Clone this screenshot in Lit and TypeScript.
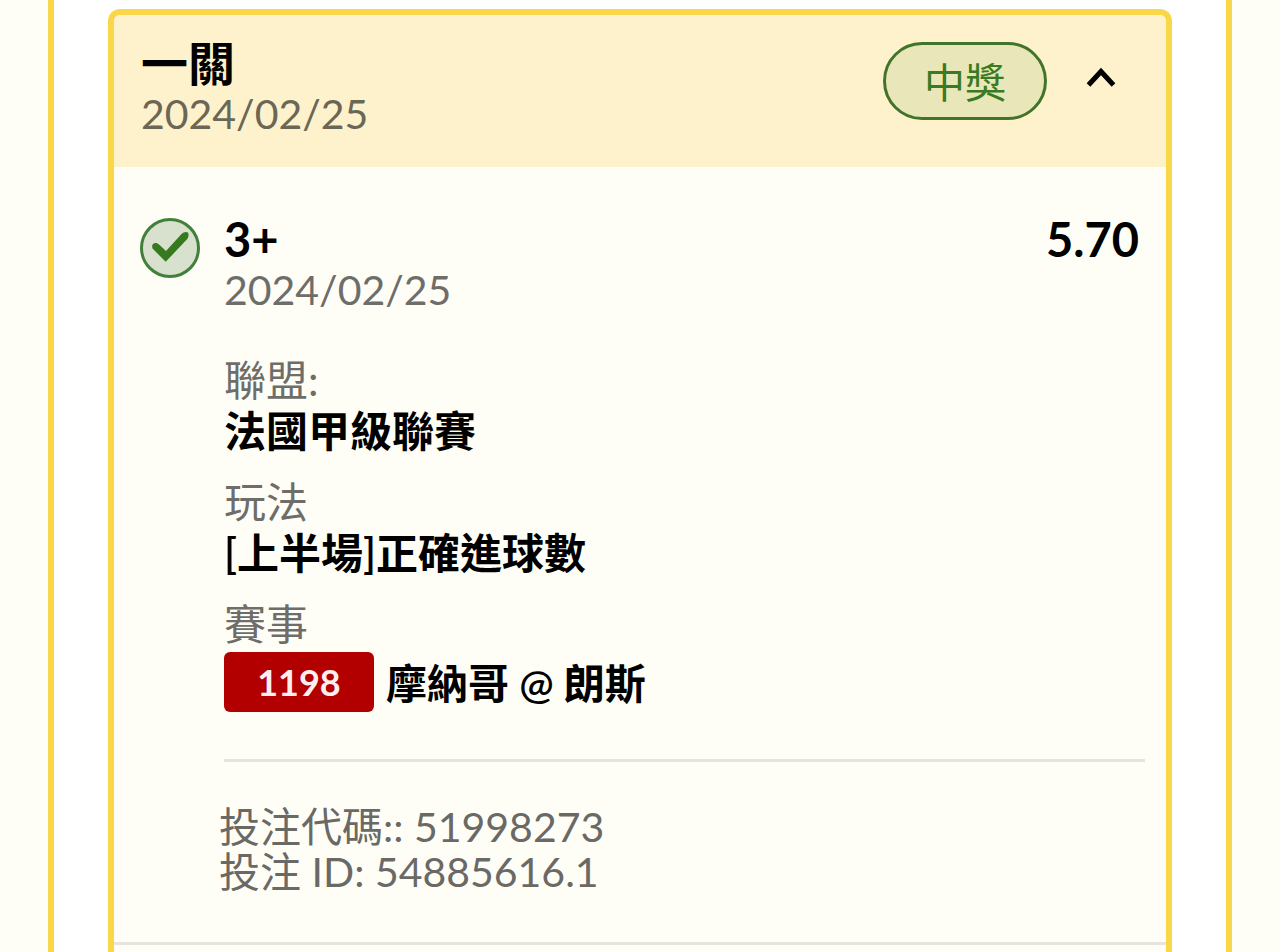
import { LitElement, html, css } from "lit";
import { customElement } from "lit/decorators.js";

interface Bet {
  title: string;
  date: string;
  status: string;
  pick: string;
  pickDate: string;
  odds: string;
  league: string;
  market: string;
  matchNo: string;
  match: string;
  code: string;
  id: string;
}

const bet: Bet = {
  title: "一關",
  date: "2024/02/25",
  status: "中獎",
  pick: "3+",
  pickDate: "2024/02/25",
  odds: "5.70",
  league: "法國甲級聯賽",
  market: "[上半場]正確進球數",
  matchNo: "1198",
  match: "摩納哥 @ 朗斯",
  code: "51998273",
  id: "54885616.1",
};

@customElement("bet-card")
export class BetCard extends LitElement {
  static styles = css`
    :host {
      display: flex;
      flex-direction: column;
      flex: 1;
      box-sizing: border-box;
      border: 6px solid #f9d749;
      border-bottom: 0;
      border-radius: 12px 12px 0 0;
      background: #fffef6;
    }
    .header {
      display: flex;
      align-items: flex-start;
      padding: 23px 27px 27px;
      background: #fef2cd;
      border-radius: 6px 6px 0 0;
    }
    .heading {
      flex: 1;
    }
    .title,
    .pick,
    .odds {
      margin: 0;
      font-size: 47px;
      line-height: 50px;
      font-weight: 700;
      color: #000;
    }
    .date {
      margin: 0;
      font-size: 41px;
      line-height: 52px;
      color: #6a6756;
    }
    .status {
      box-sizing: border-box;
      margin-top: 4px;
      padding: 4px 38px 0;
      border: 3px solid #41742a;
      border-radius: 40px;
      background: #e9e7b9;
      color: #3a7a22;
      font-size: 41px;
      line-height: 68px;
    }
    .toggle {
      display: flex;
      align-items: center;
      justify-content: center;
      width: 60px;
      height: 60px;
      margin: 10px 8px 0 24px;
      padding: 0;
      border: 0;
      background: none;
    }
    .body {
      display: grid;
      grid-template-columns: 60px 1fr;
      column-gap: 24px;
      padding: 47px 21px 48px 26px;
    }
    .won {
      display: block;
      margin-top: 4px;
    }
    .summary {
      display: flex;
      justify-content: space-between;
      padding-right: 6px;
    }
    .body .date,
    .label {
      color: #6e6d69;
    }
    .facts {
      margin: 38px 0 0;
    }
    .label {
      line-height: 52px;
    }
    .value {
      margin: 0 0 20px;
      line-height: 50px;
      font-weight: 600;
      color: #000;
    }
    .match {
      display: flex;
      align-items: center;
      gap: 12px;
      margin: 2px 0 0;
      font-size: 41px;
      line-height: 60px;
    }
    .teams {
      padding-top: 4px;
      line-height: 56px;
    }
    .number {
      width: 150px;
      border-radius: 6px;
      background: #b20000;
      color: #ffeef0;
      font-size: 36px;
      font-weight: 700;
      text-align: center;
    }
    .rule {
      height: 3px;
      margin: 47px 0 0;
      border: 0;
      background: #e7e4de;
    }
    .refs {
      grid-column: 2;
      margin: 42px 0 0 -5px;
      font-size: 41px;
      line-height: 45px;
      color: #6a6965;
    }
    .refs p {
      margin: 0;
    }
    .end {
      width: 100%;
      height: 3px;
      margin: 0;
      border: 0;
      background: #e7e4de;
    }
  `;

  render() {
    return html`
      <header class="header">
        <div class="heading">
          <h2 class="title">${bet.title}</h2>
          <p class="date">${bet.date}</p>
        </div>
        <span class="status">${bet.status}</span>
        <button class="toggle" type="button" aria-label="收合" aria-expanded="true">
          <svg width="30" height="22" viewBox="0 0 30 22" fill="none" stroke="#000" stroke-width="5">
            <path d="M2.500 18 15 4.500 27.500 18" />
          </svg>
        </button>
      </header>
      <section class="body">
        <svg class="won" width="60" height="60" viewBox="0 0 60 60" fill="none">
          <circle cx="30" cy="30" r="28.500" fill="#d7e1cd" stroke="#41803a" stroke-width="3" />
          <path
            d="M13 26C14.500 24.500 17 24.500 19 26.500L26 33 41.500 16C43.500 14 46 13.400 48 14.500 49 16.500 48.500 19.500 47 21.300L25.700 43.800 13.500 31.500C12 30 11.500 27.800 13 26Z"
            fill="#37791f"
          />
        </svg>
        <div class="content">
          <div class="summary">
            <div>
              <h3 class="pick">${bet.pick}</h3>
              <p class="date">${bet.pickDate}</p>
            </div>
            <span class="odds">${bet.odds}</span>
          </div>
          <dl class="facts">
            <dt class="label">聯盟:</dt>
            <dd class="value">${bet.league}</dd>
            <dt class="label">玩法</dt>
            <dd class="value">${bet.market}</dd>
            <dt class="label">賽事</dt>
            <dd class="value match">
              <span class="number">${bet.matchNo}</span>
              <span class="teams">${bet.match}</span>
            </dd>
          </dl>
          <hr class="rule" />
        </div>
        <div class="refs">
          <p>投注代碼:: ${bet.code}</p>
          <p>投注 ID: ${bet.id}</p>
        </div>
      </section>
      <hr class="end" />
    `;
  }
}

@customElement("app-root")
export class AppRoot extends LitElement {
  static styles = css`
    :host {
      display: block;
      padding: 0 48px;
      background: #fffef6;
      font-family: Lato, "Noto Sans CJK TC", sans-serif;
      font-size: 42px;
    }
    .panel {
      display: flex;
      flex-direction: column;
      box-sizing: border-box;
      min-height: 100vh;
      padding: 9px 54px 0;
      border: solid #f9d749;
      border-width: 0 6px;
      background: #fff;
    }
  `;

  render() {
    return html`<main class="panel" lang="zh-Hant"><bet-card></bet-card></main>`;
  }
}
